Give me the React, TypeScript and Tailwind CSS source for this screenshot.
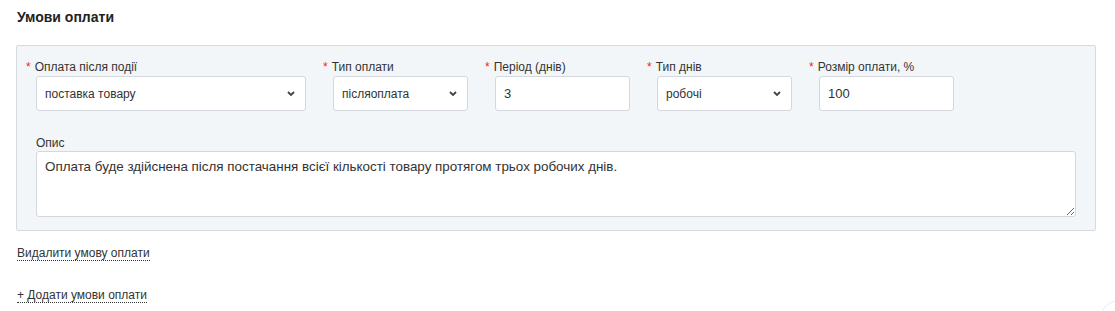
import React from "react";

const Chevron = () => (
  <svg width="8" height="5" viewBox="0 0 8 5" className="text-[#444]">
    <path d="M1 1l3 3 3-3" fill="none" stroke="currentColor" strokeWidth="1.8" />
  </svg>
);

const Label = ({ text }: { text: string }) => (
  <div className="h-[16px] leading-[16px] text-[12px] text-[#333] mb-[1px] whitespace-nowrap">
    <span className="text-[#f5222d] mr-[4px]">*</span>
    {text}
  </div>
);

const SelectBox = ({ value, width }: { value: string; width: string }) => (
  <div
    className={`${width} h-[35px] ml-[10px] bg-white border border-[#d3d8de] rounded-[3px] flex items-center justify-between pl-[8px] pr-[10px] text-[12px] text-[#333]`}
  >
    <span>{value}</span>
    <Chevron />
  </div>
);

const InputBox = ({ value }: { value: string }) => (
  <div className="w-[135px] h-[35px] ml-[10px] bg-white border border-[#d3d8de] rounded-[3px] flex items-center pl-[8px] text-[13px] text-[#333]">
    {value}
  </div>
);

export default function App() {
  return (
    <div
      className="relative h-[311px] overflow-hidden bg-white px-[17px] pt-[7px]"
      style={{ fontFamily: '"Liberation Sans", Arial, sans-serif' }}
    >
      <h2 className="text-[14px] leading-[20px] font-bold text-[#222] mb-[18px]">Умови оплати</h2>

      <div className="w-[1080px] -ml-px border border-[#d5dae1] rounded-[2px] bg-[#f3f6f9] pl-[9px] pr-[19px] pt-[13px] pb-[13px]">
        <div className="flex gap-[18px]">
          <div className="w-[279px]">
            <Label text="Оплата після події" />
            <SelectBox value="поставка товару" width="w-[270px]" />
          </div>
          <div className="w-[144px]">
            <Label text="Тип оплати" />
            <SelectBox value="післяоплата" width="w-[135px]" />
          </div>
          <div className="w-[144px]">
            <Label text="Період (днів)" />
            <InputBox value="3" />
          </div>
          <div className="w-[144px]">
            <Label text="Тип днів" />
            <SelectBox value="робочі" width="w-[135px]" />
          </div>
          <div className="w-[144px]">
            <Label text="Розмір оплати, %" />
            <InputBox value="100" />
          </div>
        </div>

        <div className="ml-[10px] mt-[24px]">
          <div className="h-[16px] leading-[16px] text-[12px] text-[#333]">Опис</div>
          <textarea
            readOnly
            value="Оплата буде здійснена після постачання всієї кількості товару протягом трьох робочих днів."
            className="block w-full h-[66px] bg-white border border-[#d3d8de] rounded-[3px] pl-[8px] pt-[5px] text-[13.4px] leading-[20px] text-[#333] outline-none"
          />
        </div>
      </div>

      <div className="flex mt-[15px]">
        <span className="text-[12px] leading-[14px] text-[#333] border-b border-dotted border-[#333]">
          Видалити умову оплати
        </span>
      </div>
      <div className="flex mt-[27px]">
        <span className="text-[12px] leading-[14px] text-[#333] border-b border-dotted border-[#333]">
          + Додати умови оплати
        </span>
      </div>

      <svg className="absolute right-0 bottom-0" width="14" height="12" viewBox="0 0 14 12">
        <path d="M2 11 Q6 4 14 2" fill="none" stroke="#d4d8dd" strokeWidth="1" strokeDasharray="1 1" />
      </svg>
    </div>
  );
}
